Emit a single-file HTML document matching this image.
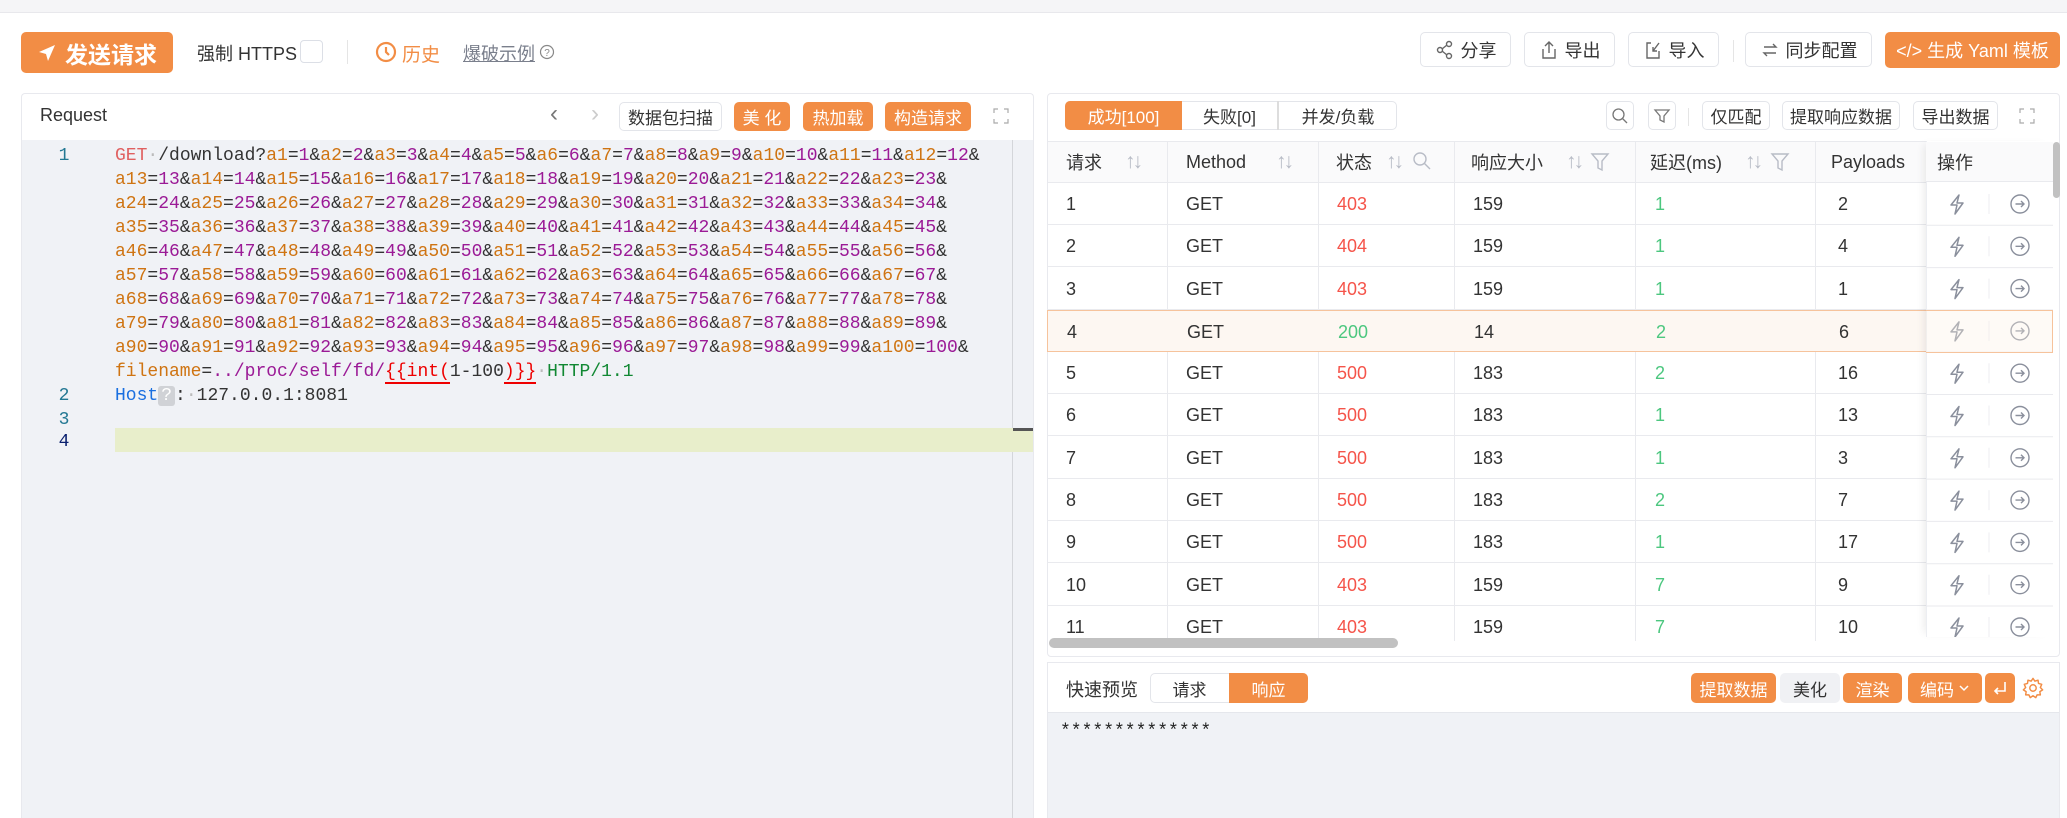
<!DOCTYPE html>
<html><head><meta charset="utf-8">
<style>
*{box-sizing:border-box;margin:0;padding:0}
body{width:2067px;height:818px;overflow:hidden;background:#fff;font-family:"Liberation Sans","Noto Sans CJK SC",sans-serif;color:#333;position:relative}
.a{position:absolute}
.btn{position:absolute;border:1px solid #e3e5ea;border-radius:5px;background:#fff;display:flex;align-items:center;justify-content:center;font-size:18px;color:#333;white-space:nowrap}
.ob{position:absolute;background:#f28d45;color:#fff;border-radius:5px;display:flex;align-items:center;justify-content:center;font-size:18px;white-space:nowrap}
.code{position:absolute;left:115px;top:144px;font-family:"Liberation Mono","Noto Sans CJK SC",monospace;font-size:18px;line-height:24px;white-space:pre;color:#333;letter-spacing:0}
.code i{font-style:normal;color:#cf7412}
.code b{font-weight:normal;color:#9b1a96}
.ln{position:absolute;left:44px;width:40px;text-align:center;font-family:"Liberation Mono",monospace;font-size:18px;line-height:24px;color:#237893}
.th{position:absolute;top:141px;height:42px;display:flex;align-items:center;font-size:18px;color:#333}
.row{position:absolute;left:1047px;width:1005px;height:42px;border-bottom:1px solid #e9eaee}
.c{position:absolute;top:0;height:42px;display:flex;align-items:center;font-size:18px}
.vl{position:absolute;top:141px;width:1px;height:500px;background:#e9eaee}
.red{color:#f5544a}.grn{color:#4cc77f}
.srt{color:#b8bcc6;font-size:21px;letter-spacing:-3px}
</style></head><body>
<div class="a" style="left:0;top:0;width:2067px;height:13px;background:#f5f5f7;border-bottom:1px solid #e8e8ec"></div>

<div class="ob" style="left:21px;top:32px;width:152px;height:41px;font-size:23px;font-weight:bold">
<svg width="20" height="20" viewBox="0 0 20 20" style="margin-right:8px"><path d="M18 2 L2 9 L9 11 L11 18 Z" fill="#fff"/></svg>发送请求</div>
<div class="a" style="left:197px;top:40px;font-size:18px">强制 HTTPS</div>
<div class="a" style="left:300px;top:40px;width:23px;height:23px;border:1px solid #dcdfe6;border-radius:4px"></div>
<div class="a" style="left:347px;top:40px;width:1px;height:24px;background:#e5e5e5"></div>
<svg class="a" style="left:375px;top:41px" width="22" height="22" viewBox="0 0 22 22"><circle cx="11" cy="11" r="9" fill="none" stroke="#f28d45" stroke-width="2.2"/><path d="M11 6 V11 L14 14" fill="none" stroke="#f28d45" stroke-width="2.2"/></svg>
<div class="a" style="left:402px;top:40px;font-size:19px;color:#f28d45">历史</div>
<div class="a" style="left:463px;top:40px;font-size:18px;color:#7a7f8c;text-decoration:underline">爆破示例</div>
<svg class="a" style="left:539px;top:44px" width="16" height="16" viewBox="0 0 16 16"><circle cx="8" cy="8" r="6.5" fill="none" stroke="#888" stroke-width="1.2"/><text x="8" y="12" font-size="10" text-anchor="middle" fill="#888" font-family="Liberation Sans">?</text></svg>

<div class="btn" style="left:1420px;top:32px;width:91px;height:35px"><svg width="20" height="20" viewBox="0 0 20 20" style="margin-right:6px"><circle cx="14" cy="4" r="2.5" fill="none" stroke="#666" stroke-width="1.4"/><circle cx="5" cy="10" r="2.5" fill="none" stroke="#666" stroke-width="1.4"/><circle cx="14" cy="16" r="2.5" fill="none" stroke="#666" stroke-width="1.4"/><path d="M7 9 L12 5 M7 11 L12 15" stroke="#666" stroke-width="1.4"/></svg>分享</div>
<div class="btn" style="left:1524px;top:32px;width:91px;height:35px"><svg width="20" height="20" viewBox="0 0 20 20" style="margin-right:6px"><path d="M10 13 V2 M6 6 L10 2 L14 6 M4 9 V18 H16 V9" fill="none" stroke="#666" stroke-width="1.4"/></svg>导出</div>
<div class="btn" style="left:1628px;top:32px;width:91px;height:35px"><svg width="20" height="20" viewBox="0 0 20 20" style="margin-right:6px"><path d="M8 3 H4 V18 H16 V11 M16 3 L10 11 M10 7 V11 H14" fill="none" stroke="#666" stroke-width="1.4"/></svg>导入</div>
<div class="a" style="left:1733px;top:40px;width:1px;height:22px;background:#e5e5e5"></div>
<div class="btn" style="left:1745px;top:32px;width:127px;height:35px"><svg width="20" height="20" viewBox="0 0 20 20" style="margin-right:6px"><path d="M4 7 H16 L13 4 M16 13 H4 L7 16" fill="none" stroke="#666" stroke-width="1.4"/></svg>同步配置</div>
<div class="ob" style="left:1885px;top:32px;width:175px;height:36px">&lt;/&gt;&nbsp;生成 Yaml 模板</div>

<div class="a" style="left:21px;top:93px;width:1013px;height:725px;border:1px solid #e8e9ee;border-bottom:none;border-radius:4px 4px 0 0;background:#fff"></div>
<div class="a" style="left:40px;top:105px;font-size:18px">Request</div>
<div class="a" style="left:550px;top:100px;font-size:24px;color:#777">&#x2039;</div>
<div class="a" style="left:591px;top:100px;font-size:24px;color:#ccc">&#x203A;</div>
<div class="btn" style="left:619px;top:102px;width:103px;height:29px;font-size:17px">数据包扫描</div>
<div class="ob" style="left:734px;top:102px;width:56px;height:29px;font-size:17px">美 化</div>
<div class="ob" style="left:803px;top:102px;width:70px;height:29px;font-size:17px">热加载</div>
<div class="ob" style="left:885px;top:102px;width:86px;height:29px;font-size:17px">构造请求</div>
<svg class="a" style="left:993px;top:108px" width="16" height="16" viewBox="0 0 16 16"><path d="M1 5V1H5M11 1H15V5M15 11V15H11M5 15H1V11" fill="none" stroke="#aaa" stroke-width="1.2"/></svg>
<div class="a" style="left:22px;top:140px;width:1011px;height:678px;background:#f0f2f6"></div>
<div class="a" style="left:1012px;top:140px;width:1px;height:678px;background:#d4d6da"></div>
<div class="a" style="left:115px;top:428px;width:918px;height:24px;background:#e8eecb"></div>
<div class="a" style="left:1013px;top:428px;width:20px;height:3px;background:#555"></div>
<div class="ln" style="top:144px">1</div>
<div class="ln" style="top:384px">2</div>
<div class="ln" style="top:408px">3</div>
<div class="ln" style="top:430px;color:#0b216f">4</div>
<div class="code"><span style="color:#e06060">GET</span><span style="color:#bbb">·</span>/download?<i>a1</i>=<b>1</b>&amp;<i>a2</i>=<b>2</b>&amp;<i>a3</i>=<b>3</b>&amp;<i>a4</i>=<b>4</b>&amp;<i>a5</i>=<b>5</b>&amp;<i>a6</i>=<b>6</b>&amp;<i>a7</i>=<b>7</b>&amp;<i>a8</i>=<b>8</b>&amp;<i>a9</i>=<b>9</b>&amp;<i>a10</i>=<b>10</b>&amp;<i>a11</i>=<b>11</b>&amp;<i>a12</i>=<b>12</b>&amp;
<i>a13</i>=<b>13</b>&amp;<i>a14</i>=<b>14</b>&amp;<i>a15</i>=<b>15</b>&amp;<i>a16</i>=<b>16</b>&amp;<i>a17</i>=<b>17</b>&amp;<i>a18</i>=<b>18</b>&amp;<i>a19</i>=<b>19</b>&amp;<i>a20</i>=<b>20</b>&amp;<i>a21</i>=<b>21</b>&amp;<i>a22</i>=<b>22</b>&amp;<i>a23</i>=<b>23</b>&amp;
<i>a24</i>=<b>24</b>&amp;<i>a25</i>=<b>25</b>&amp;<i>a26</i>=<b>26</b>&amp;<i>a27</i>=<b>27</b>&amp;<i>a28</i>=<b>28</b>&amp;<i>a29</i>=<b>29</b>&amp;<i>a30</i>=<b>30</b>&amp;<i>a31</i>=<b>31</b>&amp;<i>a32</i>=<b>32</b>&amp;<i>a33</i>=<b>33</b>&amp;<i>a34</i>=<b>34</b>&amp;
<i>a35</i>=<b>35</b>&amp;<i>a36</i>=<b>36</b>&amp;<i>a37</i>=<b>37</b>&amp;<i>a38</i>=<b>38</b>&amp;<i>a39</i>=<b>39</b>&amp;<i>a40</i>=<b>40</b>&amp;<i>a41</i>=<b>41</b>&amp;<i>a42</i>=<b>42</b>&amp;<i>a43</i>=<b>43</b>&amp;<i>a44</i>=<b>44</b>&amp;<i>a45</i>=<b>45</b>&amp;
<i>a46</i>=<b>46</b>&amp;<i>a47</i>=<b>47</b>&amp;<i>a48</i>=<b>48</b>&amp;<i>a49</i>=<b>49</b>&amp;<i>a50</i>=<b>50</b>&amp;<i>a51</i>=<b>51</b>&amp;<i>a52</i>=<b>52</b>&amp;<i>a53</i>=<b>53</b>&amp;<i>a54</i>=<b>54</b>&amp;<i>a55</i>=<b>55</b>&amp;<i>a56</i>=<b>56</b>&amp;
<i>a57</i>=<b>57</b>&amp;<i>a58</i>=<b>58</b>&amp;<i>a59</i>=<b>59</b>&amp;<i>a60</i>=<b>60</b>&amp;<i>a61</i>=<b>61</b>&amp;<i>a62</i>=<b>62</b>&amp;<i>a63</i>=<b>63</b>&amp;<i>a64</i>=<b>64</b>&amp;<i>a65</i>=<b>65</b>&amp;<i>a66</i>=<b>66</b>&amp;<i>a67</i>=<b>67</b>&amp;
<i>a68</i>=<b>68</b>&amp;<i>a69</i>=<b>69</b>&amp;<i>a70</i>=<b>70</b>&amp;<i>a71</i>=<b>71</b>&amp;<i>a72</i>=<b>72</b>&amp;<i>a73</i>=<b>73</b>&amp;<i>a74</i>=<b>74</b>&amp;<i>a75</i>=<b>75</b>&amp;<i>a76</i>=<b>76</b>&amp;<i>a77</i>=<b>77</b>&amp;<i>a78</i>=<b>78</b>&amp;
<i>a79</i>=<b>79</b>&amp;<i>a80</i>=<b>80</b>&amp;<i>a81</i>=<b>81</b>&amp;<i>a82</i>=<b>82</b>&amp;<i>a83</i>=<b>83</b>&amp;<i>a84</i>=<b>84</b>&amp;<i>a85</i>=<b>85</b>&amp;<i>a86</i>=<b>86</b>&amp;<i>a87</i>=<b>87</b>&amp;<i>a88</i>=<b>88</b>&amp;<i>a89</i>=<b>89</b>&amp;
<i>a90</i>=<b>90</b>&amp;<i>a91</i>=<b>91</b>&amp;<i>a92</i>=<b>92</b>&amp;<i>a93</i>=<b>93</b>&amp;<i>a94</i>=<b>94</b>&amp;<i>a95</i>=<b>95</b>&amp;<i>a96</i>=<b>96</b>&amp;<i>a97</i>=<b>97</b>&amp;<i>a98</i>=<b>98</b>&amp;<i>a99</i>=<b>99</b>&amp;<i>a100</i>=<b>100</b>&amp;
<i>filename</i>=<b>../proc/self/fd/</b><span style="color:#e00;border-bottom:2px solid #e00">{{int(</span>1-100<span style="color:#e00;border-bottom:2px solid #e00">)}}</span><span style="color:#bbb">·</span><span style="color:#118833">HTTP/1.1</span>
<span style="color:#1a6fe0">Host</span><span style="background:#d0d2d6;color:#fff;border-radius:3px;padding:0 3px">?</span>:<span style="color:#bbb">·</span>127.0.0.1:8081</div>

<div class="a" style="left:1047px;top:93px;width:1013px;height:564px;border:1px solid #e8e9ee;border-radius:4px;background:#fff"></div>
<div class="a" style="left:1065px;top:101px;width:332px;height:29px;border:1px solid #e3e5ea;border-radius:5px"></div>
<div class="ob" style="left:1065px;top:101px;width:117px;height:29px;font-size:17px;border-radius:5px 0 0 5px">成功[100]</div>
<div class="a" style="left:1182px;top:101px;width:97px;height:29px;display:flex;align-items:center;justify-content:center;font-size:17px;border-right:2px solid #ddd">失败[0]</div>
<div class="a" style="left:1279px;top:101px;width:118px;height:29px;display:flex;align-items:center;justify-content:center;font-size:17px">并发/负载</div>
<div class="btn" style="left:1606px;top:101px;width:28px;height:29px"><svg width="18" height="18" viewBox="0 0 18 18"><circle cx="7.5" cy="7.5" r="5.5" fill="none" stroke="#777" stroke-width="1.3"/><path d="M11.5 11.5 L16 16" stroke="#777" stroke-width="1.3"/></svg></div>
<div class="btn" style="left:1648px;top:101px;width:28px;height:29px"><svg width="18" height="18" viewBox="0 0 18 18"><path d="M2 3 H16 L11 9 V15 L7 13 V9 Z" fill="none" stroke="#777" stroke-width="1.3"/></svg></div>
<div class="a" style="left:1688px;top:108px;width:1px;height:18px;background:#e5e5e5"></div>
<div class="btn" style="left:1702px;top:101px;width:68px;height:29px;font-size:17px">仅匹配</div>
<div class="btn" style="left:1782px;top:101px;width:118px;height:29px;font-size:17px">提取响应数据</div>
<div class="btn" style="left:1913px;top:101px;width:85px;height:29px;font-size:17px">导出数据</div>
<svg class="a" style="left:2019px;top:108px" width="16" height="16" viewBox="0 0 16 16"><path d="M1 5V1H5M11 1H15V5M15 11V15H11M5 15H1V11" fill="none" stroke="#aaa" stroke-width="1.2"/></svg>

<div class="a" style="left:1048px;top:141px;width:1005px;height:42px;background:#fafafb;border-top:1px solid #e9eaee;border-bottom:1px solid #e9eaee"></div>
<div class="vl" style="left:1167px"></div><div class="vl" style="left:1318px"></div><div class="vl" style="left:1454px"></div><div class="vl" style="left:1635px"></div><div class="vl" style="left:1815px"></div>
<div class="th" style="left:1066px">请求</div><div class="th srt" style="left:1125px">↑↓</div>
<div class="th" style="left:1186px">Method</div><div class="th srt" style="left:1276px">↑↓</div>
<div class="th" style="left:1336px">状态</div><div class="th srt" style="left:1386px">↑↓</div><svg class="a" style="left:1412px;top:151px" width="20" height="20" viewBox="0 0 20 20"><circle cx="8" cy="8" r="6" fill="none" stroke="#b8bcc6" stroke-width="1.4"/><path d="M12.5 12.5 L18 18" stroke="#b8bcc6" stroke-width="1.4"/></svg>
<div class="th" style="left:1471px">响应大小</div><div class="th srt" style="left:1566px">↑↓</div><svg class="a" style="left:1590px;top:151px" width="20" height="22" viewBox="0 0 20 22"><path d="M2 3 H18 L12 10 V19 L8 17 V10 Z" fill="none" stroke="#b8bcc6" stroke-width="1.4"/></svg>
<div class="th" style="left:1650px">延迟(ms)</div><div class="th srt" style="left:1745px">↑↓</div><svg class="a" style="left:1770px;top:151px" width="20" height="22" viewBox="0 0 20 22"><path d="M2 3 H18 L12 10 V19 L8 17 V10 Z" fill="none" stroke="#b8bcc6" stroke-width="1.4"/></svg>
<div class="th" style="left:1831px">Payloads</div>

<div id="rows">
<div class="row" style="top:183px"><div class="c" style="left:19px">1</div><div class="c" style="left:139px">GET</div><div class="c red" style="left:290px">403</div><div class="c" style="left:426px">159</div><div class="c grn" style="left:608px">1</div><div class="c" style="left:791px">2</div></div>
<div class="row" style="top:225px"><div class="c" style="left:19px">2</div><div class="c" style="left:139px">GET</div><div class="c red" style="left:290px">404</div><div class="c" style="left:426px">159</div><div class="c grn" style="left:608px">1</div><div class="c" style="left:791px">4</div></div>
<div class="row" style="top:268px"><div class="c" style="left:19px">3</div><div class="c" style="left:139px">GET</div><div class="c red" style="left:290px">403</div><div class="c" style="left:426px">159</div><div class="c grn" style="left:608px">1</div><div class="c" style="left:791px">1</div></div>
<div class="row" style="top:310px;background:#fdf7f2;border:1px solid #f6c39c"><div class="c" style="left:19px">4</div><div class="c" style="left:139px">GET</div><div class="c grn" style="left:290px">200</div><div class="c" style="left:426px">14</div><div class="c grn" style="left:608px">2</div><div class="c" style="left:791px">6</div></div>
<div class="row" style="top:352px"><div class="c" style="left:19px">5</div><div class="c" style="left:139px">GET</div><div class="c red" style="left:290px">500</div><div class="c" style="left:426px">183</div><div class="c grn" style="left:608px">2</div><div class="c" style="left:791px">16</div></div>
<div class="row" style="top:394px"><div class="c" style="left:19px">6</div><div class="c" style="left:139px">GET</div><div class="c red" style="left:290px">500</div><div class="c" style="left:426px">183</div><div class="c grn" style="left:608px">1</div><div class="c" style="left:791px">13</div></div>
<div class="row" style="top:437px"><div class="c" style="left:19px">7</div><div class="c" style="left:139px">GET</div><div class="c red" style="left:290px">500</div><div class="c" style="left:426px">183</div><div class="c grn" style="left:608px">1</div><div class="c" style="left:791px">3</div></div>
<div class="row" style="top:479px"><div class="c" style="left:19px">8</div><div class="c" style="left:139px">GET</div><div class="c red" style="left:290px">500</div><div class="c" style="left:426px">183</div><div class="c grn" style="left:608px">2</div><div class="c" style="left:791px">7</div></div>
<div class="row" style="top:521px"><div class="c" style="left:19px">9</div><div class="c" style="left:139px">GET</div><div class="c red" style="left:290px">500</div><div class="c" style="left:426px">183</div><div class="c grn" style="left:608px">1</div><div class="c" style="left:791px">17</div></div>
<div class="row" style="top:564px"><div class="c" style="left:19px">10</div><div class="c" style="left:139px">GET</div><div class="c red" style="left:290px">403</div><div class="c" style="left:426px">159</div><div class="c grn" style="left:608px">7</div><div class="c" style="left:791px">9</div></div>
<div class="row" style="top:606px;height:31px;overflow:hidden;border:none"><div class="c" style="left:19px">11</div><div class="c" style="left:139px">GET</div><div class="c red" style="left:290px">403</div><div class="c" style="left:426px">159</div><div class="c grn" style="left:608px">7</div><div class="c" style="left:791px">10</div></div>
</div>

<div class="a" style="left:1926px;top:141px;width:127px;height:496px;background:#fff;box-shadow:-6px 0 8px -4px rgba(0,0,0,0.08);border-left:1px solid #eceef2"></div>
<div class="a" style="left:1926px;top:142px;width:127px;height:40px;background:#fafafb;border-bottom:1px solid #e9eaee"></div>
<div class="th" style="left:1937px">操作</div>
<svg class="a" style="left:1926px;top:183px" width="127" height="454" viewBox="0 0 127 454">
<defs><g id="op"><path d="M33 12 L25 22 H31 L29 31 L37 20 H31 Z" fill="none" stroke="#8a8f9c" stroke-width="1.5" stroke-linejoin="round"/><line x1="63" y1="11" x2="63" y2="31" stroke="#eceef2"/><circle cx="94" cy="21" r="9" fill="none" stroke="#8a8f9c" stroke-width="1.4"/><path d="M89.5 21 H98 M95 18 L98 21 L95 24" fill="none" stroke="#8a8f9c" stroke-width="1.4"/><line x1="0" y1="42.3" x2="127" y2="42.3" stroke="#e9eaee"/></g></defs>
<use href="#op" y="0"/><use href="#op" y="42.3"/><use href="#op" y="84.6"/><use href="#op" y="126.9"/><use href="#op" y="169.2"/><use href="#op" y="211.5"/><use href="#op" y="253.8"/><use href="#op" y="296.1"/><use href="#op" y="338.4"/><use href="#op" y="380.7"/><use href="#op" y="423"/>
</svg>
<div class="a" style="left:1926px;top:310px;width:127px;height:43px;border:1px solid #f6c39c;border-left:none;background:rgba(253,240,228,0.35)"></div>
<div class="a" style="left:2053px;top:142px;width:7px;height:56px;background:#c1c1c1;border-radius:4px"></div>
<div class="a" style="left:1049px;top:638px;width:349px;height:10px;background:#c1c1c1;border-radius:5px"></div>

<div class="a" style="left:1047px;top:662px;width:1013px;height:156px;border:1px solid #e8e9ee;background:#fff"></div>
<div class="a" style="left:1066px;top:676px;font-size:18px">快速预览</div>
<div class="a" style="left:1150px;top:673px;width:158px;height:30px;border:1px solid #e3e5ea;border-radius:5px"></div>
<div class="a" style="left:1150px;top:673px;width:79px;height:30px;display:flex;align-items:center;justify-content:center;font-size:17px">请求</div>
<div class="ob" style="left:1229px;top:673px;width:79px;height:30px;font-size:17px;border-radius:0 5px 5px 0">响应</div>
<div class="ob" style="left:1691px;top:673px;width:85px;height:30px;font-size:17px">提取数据</div>
<div class="a" style="left:1780px;top:673px;width:60px;height:30px;background:#f0f1f4;border-radius:5px;display:flex;align-items:center;justify-content:center;font-size:17px">美化</div>
<div class="ob" style="left:1843px;top:673px;width:59px;height:30px;font-size:17px">渲染</div>
<div class="ob" style="left:1908px;top:673px;width:74px;height:30px;font-size:17px">编码 <svg width="12" height="10" viewBox="0 0 12 10" style="margin-left:4px"><path d="M2 3 L6 7 L10 3" fill="none" stroke="#fff" stroke-width="1.5"/></svg></div>
<div class="ob" style="left:1985px;top:673px;width:30px;height:30px"><svg width="16" height="16" viewBox="0 0 16 16"><path d="M13 2 V11 H3 M6 8 L3 11 L6 14" fill="none" stroke="#fff" stroke-width="1.6"/></svg></div>
<svg class="a" style="left:2022px;top:677px" width="22" height="22" viewBox="0 0 24 24"><path d="M12 1.5 L14 4.5 L17.5 3.5 L18 7 L21.5 8 L20 11.5 L22.5 14 L19.5 16 L20 19.5 L16.5 19.5 L15 22.5 L12 20.5 L9 22.5 L7.5 19.5 L4 19.5 L4.5 16 L1.5 14 L4 11.5 L2.5 8 L6 7 L6.5 3.5 L10 4.5 Z" fill="none" stroke="#f28d45" stroke-width="1.6" stroke-linejoin="round"/><circle cx="12" cy="12" r="3.5" fill="none" stroke="#f28d45" stroke-width="1.6"/></svg>
<div class="a" style="left:1048px;top:712px;width:1011px;height:106px;background:#f0f2f6;border-top:1px solid #e5e7ec"></div>
<div class="a" style="left:1060px;top:722px;font-family:'Liberation Mono',monospace;font-size:18px;color:#222">**************</div>
</body></html>
